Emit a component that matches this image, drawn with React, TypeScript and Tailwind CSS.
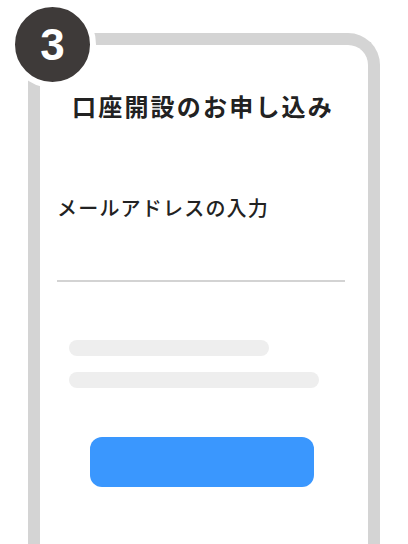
import React from "react";

export default function App() {
  return (
    <div className="relative w-[408px] h-[544px] overflow-hidden bg-white" style={{ fontFamily: '"Noto Sans CJK JP", "Noto Sans", sans-serif' }}>
      <div className="ml-[28px] mt-[33px] w-[352px] h-[560px] rounded-t-[32px] border-[12px] border-b-0 border-[#d4d4d4] bg-white">
        <div className="flex flex-col pl-[17px]">
          <h1 className="mt-[43px] ml-[15px] text-[24px] leading-[36px] font-semibold tracking-[2.2px] text-[#222]">口座開設のお申し込み</h1>
          <p className="mt-[69px] text-[20px] leading-[30px] font-medium tracking-[1.2px] text-[#222]">メールアドレスの入力</p>
          <div className="mt-[57px] w-[288px] h-[2px] bg-[#d3d3d3]" />
          <div className="mt-[58px] ml-[12px] w-[200px] h-[16px] rounded-full bg-[#eeeeee]" />
          <div className="mt-[16px] ml-[12px] w-[250px] h-[16px] rounded-full bg-[#eeeeee]" />
          <div className="mt-[49px] ml-[33px] w-[224px] h-[50px] rounded-[12px] bg-[#3a97fe]" />
        </div>
      </div>
      <div className="absolute left-[9px] top-[1px] w-[87px] h-[87px] rounded-full border-[6px] border-white bg-[#3e3a39] flex items-center justify-center">
        <span className="text-white text-[44px] font-bold leading-none" style={{ fontFamily: '"Liberation Sans", Arial, sans-serif' }}>3</span>
      </div>
    </div>
  );
}
